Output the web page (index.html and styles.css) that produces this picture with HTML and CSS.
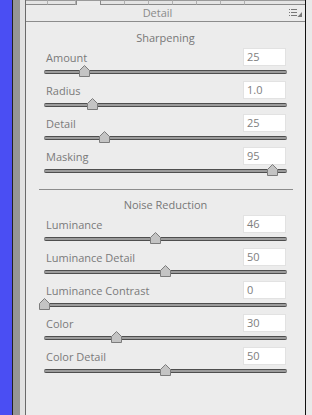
FILE: index.html
```html
<!DOCTYPE html>
<html>
<head>
<meta charset="utf-8">
<link rel="stylesheet" href="styles.css">
</head>
<body>
<div class="app">
  <div class="blue"></div>
  <div class="edge-dark"></div>
  <div class="edge-gray"></div>
  <div class="edge-light"></div>
  <div class="panel">
    <div class="tabs">
      <span class="tab t1"></span><span class="tab t2"></span><span class="tab sel"></span><span class="tab t3"></span><span class="tab t3"></span><span class="tab t3"></span><span class="tab t3"></span><span class="tab t3"></span><span class="tab t3"></span><span class="tab rest"></span>
    </div>
    <div class="header">
      <span class="title">Detail</span>
      <svg class="menu" width="13" height="8" viewBox="0 0 13 8">
        <rect x="0" y="0" width="1" height="1" fill="#777"/>
        <rect x="2" y="0" width="6" height="1" fill="#777"/>
        <rect x="0" y="3" width="1" height="1" fill="#777"/>
        <rect x="2" y="3" width="6" height="1" fill="#777"/>
        <rect x="0" y="6" width="1" height="1" fill="#777"/>
        <rect x="2" y="6" width="6" height="1" fill="#777"/>
        <polygon points="13,3 13,8 8.5,8" fill="#777"/>
      </svg>
    </div>

    <div class="section-title first">Sharpening</div>
    <div class="row"><div class="top"><span class="label">Amount</span><span class="val">25</span></div><div class="track-wrap"><div class="track"><svg class="thumb" style="left:16.7%" width="11" height="12" viewBox="0 0 11 12"><path d="M0.5 11.5 V5.5 L5.5 0.5 L10.5 5.5 V11.5 Z" fill="#c4c4c4" stroke="#7c7c7c"/></svg></div></div></div>
    <div class="row"><div class="top"><span class="label">Radius</span><span class="val">1.0</span></div><div class="track-wrap"><div class="track"><svg class="thumb" style="left:20%" width="11" height="12" viewBox="0 0 11 12"><path d="M0.5 11.5 V5.5 L5.5 0.5 L10.5 5.5 V11.5 Z" fill="#c4c4c4" stroke="#7c7c7c"/></svg></div></div></div>
    <div class="row"><div class="top"><span class="label">Detail</span><span class="val">25</span></div><div class="track-wrap"><div class="track"><svg class="thumb" style="left:25%" width="11" height="12" viewBox="0 0 11 12"><path d="M0.5 11.5 V5.5 L5.5 0.5 L10.5 5.5 V11.5 Z" fill="#c4c4c4" stroke="#7c7c7c"/></svg></div></div></div>
    <div class="row"><div class="top"><span class="label">Masking</span><span class="val">95</span></div><div class="track-wrap"><div class="track"><svg class="thumb" style="left:94%" width="11" height="12" viewBox="0 0 11 12"><path d="M0.5 11.5 V5.5 L5.5 0.5 L10.5 5.5 V11.5 Z" fill="#c4c4c4" stroke="#7c7c7c"/></svg></div></div></div>

    <div class="sep"></div>

    <div class="section-title second">Noise Reduction</div>
    <div class="row"><div class="top"><span class="label">Luminance</span><span class="val">46</span></div><div class="track-wrap"><div class="track"><svg class="thumb" style="left:46%" width="11" height="12" viewBox="0 0 11 12"><path d="M0.5 11.5 V5.5 L5.5 0.5 L10.5 5.5 V11.5 Z" fill="#c4c4c4" stroke="#7c7c7c"/></svg></div></div></div>
    <div class="row"><div class="top"><span class="label">Luminance Detail</span><span class="val">50</span></div><div class="track-wrap"><div class="track"><svg class="thumb" style="left:50%" width="11" height="12" viewBox="0 0 11 12"><path d="M0.5 11.5 V5.5 L5.5 0.5 L10.5 5.5 V11.5 Z" fill="#c4c4c4" stroke="#7c7c7c"/></svg></div></div></div>
    <div class="row"><div class="top"><span class="label">Luminance Contrast</span><span class="val">0</span></div><div class="track-wrap"><div class="track"><svg class="thumb" style="left:0%" width="11" height="12" viewBox="0 0 11 12"><path d="M0.5 11.5 V5.5 L5.5 0.5 L10.5 5.5 V11.5 Z" fill="#c4c4c4" stroke="#7c7c7c"/></svg></div></div></div>
    <div class="row"><div class="top"><span class="label">Color</span><span class="val">30</span></div><div class="track-wrap"><div class="track"><svg class="thumb" style="left:30%" width="11" height="12" viewBox="0 0 11 12"><path d="M0.5 11.5 V5.5 L5.5 0.5 L10.5 5.5 V11.5 Z" fill="#c4c4c4" stroke="#7c7c7c"/></svg></div></div></div>
    <div class="row"><div class="top"><span class="label">Color Detail</span><span class="val">50</span></div><div class="track-wrap"><div class="track"><svg class="thumb" style="left:50%" width="11" height="12" viewBox="0 0 11 12"><path d="M0.5 11.5 V5.5 L5.5 0.5 L10.5 5.5 V11.5 Z" fill="#c4c4c4" stroke="#7c7c7c"/></svg></div></div></div>
  </div>
  <div class="right"></div>
</div>
</body>
</html>
```
FILE: styles.css
```css
* { box-sizing: border-box; }
html, body { margin: 0; padding: 0; }
body {
  width: 312px;
  height: 415px;
  overflow: hidden;
  background: #ececec;
  font-family: "Open Sans", "DejaVu Sans", sans-serif;
  font-size: 11px;
}
.app {
  display: flex;
  height: 415px;
}
.blue { width: 12px; background: #4a4ef3; }
.edge-dark { width: 1px; background: #222; }
.edge-gray { width: 7px; background: #959595; }
.edge-light { width: 5px; background: #e2e2e2; }
.panel {
  width: 281px;
  background: #ececec;
  border-left: 1px solid #6a6a6a;
  border-right: 1px solid #111;
  display: flex;
  flex-direction: column;
}
.right { flex: 1; background: #e9e9e9; }

.tabs {
  display: flex;
  height: 5px;
  background: #e4e4e4;
}
.tab {
  height: 5px;
  border-bottom: 1px solid #8a8a8a;
  border-top: 1px solid #9a9a9a;
  border-right: 1px solid #b0b0b0;
}
.t1 { width: 22px; }
.t2 { width: 28px; }
.sel { width: 25px; border-top: 1px solid #9a9a9a; border-bottom: none; border-left: 1px solid #8a8a8a; border-right: 1px solid #8a8a8a; background: #ececec; }
.t3 { width: 24px; }
.rest { flex: 1; border-right: none; }

.header {
  height: 17px;
  border-bottom: 1px solid #8c8c8c;
  display: flex;
  align-items: center;
  justify-content: center;
  position: relative;
  background: #ebebeb;
}
.title {
  color: #8a8a8a;
  font-size: 11px;
  line-height: 16px;
  margin-left: -16px;
}
.menu {
  position: absolute;
  right: 3px;
  top: 4px;
}

.section-title {
  text-align: center;
  color: #777;
  font-size: 11px;
  line-height: 15px;
  height: 15px;
}
.section-title.first { margin-top: 8px; margin-bottom: 3px; }
.section-title.second { margin-top: 7px; margin-bottom: 3px; }

.row {
  height: 33px;
  padding: 0 18px;
}
.top {
  height: 18px;
  display: flex;
  align-items: center;
  justify-content: space-between;
}
.label {
  color: #7a7a7a;
  padding-left: 2px;
  line-height: 15px;
}
.val {
  width: 43px;
  height: 18px;
  margin-right: 1px;
  background: #fff;
  border: 1px solid #e2e2e2;
  color: #7e7e7e;
  padding-left: 3px;
  line-height: 16px;
}
.track-wrap {
  padding-top: 4px;
}
.track {
  position: relative;
  height: 4px;
  background: #9c9c9c;
  border-top: 1px solid #4e4e4e;
  border-bottom: 1px solid #4e4e4e;
  border-radius: 2px;
}
.thumb {
  position: absolute;
  top: -6px;
  margin-left: -5.5px;
  display: block;
}
.sep {
  height: 1px;
  background: #8c8c8c;
  margin: 9px 12px 0 13px;
}
```
